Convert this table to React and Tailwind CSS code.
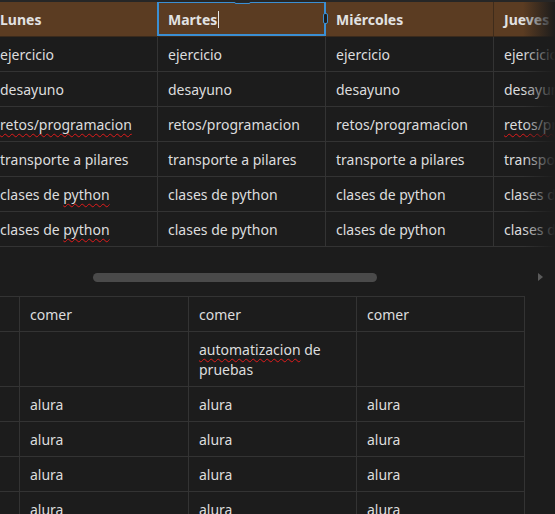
import React from 'react';

const days = ['Lunes', 'Martes', 'Miércoles', 'Jueves'];

const rows1 = [
  ['ejercicio', false],
  ['desayuno', false],
  ['retos/programacion', true],
  ['transporte a pilares', false],
  ['clases de python', 'python'],
  ['clases de python', 'python'],
];

function Misspelled({ children }) {
  return (
    <span className="underline decoration-wavy decoration-[#e01b1b] decoration-1 underline-offset-[3px]">
      {children}
    </span>
  );
}

function CellText({ text, spell, col }) {
  // spell check marks only show in the first and last visible column
  if (!spell || col === 1 || col === 2) return <span>{text}</span>;
  if (spell === true) return <Misspelled>{text}</Misspelled>;
  const i = text.indexOf(spell);
  return (
    <span>
      {text.slice(0, i)}
      <Misspelled>{spell}</Misspelled>
      {text.slice(i + spell.length)}
    </span>
  );
}

const rows2 = [
  ['', 'comer', 'comer', 'comer'],
  ['', '', 'automatizacion de pruebas', ''],
  ['', 'alura', 'alura', 'alura'],
  ['', 'alura', 'alura', 'alura'],
  ['', 'alura', 'alura', 'alura'],
  ['', 'alura', 'alura', 'alura'],
];

const widths2 = ['w-[168px]', 'w-[169px]', 'w-[168px]', 'w-[168px]'];

export default function App() {
  return (
    <div
      className="w-[555px] h-[514px] overflow-hidden bg-[#1c1c1c] text-[#dcddde] text-[14px] leading-5"
      style={{ fontFamily: '"Noto Sans", "Open Sans", sans-serif' }}
    >
      <div className="h-[2px] bg-[#262626]" />

      {/* top table */}
      <div className="relative overflow-hidden">
        <div className="flex flex-col ml-[-10px] w-max">
          <div className="flex h-[35px] bg-[#5b3c22] border-b border-[#3a2a1c]">
            {days.map((d, i) => (
              <div
                key={d}
                className="relative w-[168px] shrink-0 flex items-center pl-[10px] pt-px border-r border-[#3f2c1b] font-bold text-[#e2e2e2]"
              >
                {d}
                {i === 1 && (
                  <>
                    <span className="w-px h-[17px] bg-[#e6e6e6] ml-px" />
                    <div className="absolute -left-px -top-px w-[169px] h-[35px] border-2 border-[#3b8fd3]" />
                    <div className="absolute left-[76px] -top-[3px] w-[17px] h-[5px] rounded-[2px] bg-[#2a2a2a] border border-[#3b8fd3]" />
                    <div className="absolute -right-[3px] top-[11px] w-[5px] h-[11px] rounded-[2px] bg-[#1e1e1e] border border-[#3b8fd3]" />
                  </>
                )}
              </div>
            ))}
          </div>
          {rows1.map(([text, spell], r) => (
            <div key={r} className="flex h-[35px] border-b border-[#333333]">
              {days.map((d, c) => (
                <div
                  key={d}
                  className="w-[168px] shrink-0 flex items-center pl-[10px] pt-[2px] border-r border-[#333333] whitespace-nowrap overflow-hidden"
                >
                  <CellText text={text} spell={spell} col={c} />
                </div>
              ))}
            </div>
          ))}
        </div>
        <div className="absolute right-0 top-0 bottom-0 w-[32px] bg-gradient-to-r from-transparent to-[#1c1c1c]" />
      </div>

      {/* horizontal scrollbar */}
      <div className="relative h-[49px]">
        <div className="absolute left-[93px] top-[26px] w-[284px] h-[9px] rounded-full bg-[#4a4a4a]" />
        <div className="absolute left-[538px] top-[26px] w-0 h-0 border-y-[4px] border-y-transparent border-l-[5px] border-l-[#5a5a5a]" />
      </div>

      {/* bottom table */}
      <div className="flex flex-col ml-[-148px] w-max border-t border-[#333333]">
        {rows2.map((cells, r) => (
          <div
            key={r}
            className={`flex border-b border-[#333333] ${r === 1 ? 'h-[55px]' : 'h-[35px]'}`}
          >
            {cells.map((text, c) => (
              <div
                key={c}
                className={`${widths2[c]} shrink-0 flex items-center pl-[10px] pr-2 pt-[2px] border-r border-[#333333]`}
              >
                {text.startsWith('automatizacion') ? (
                  <span>
                    <Misspelled>automatizacion</Misspelled> de pruebas
                  </span>
                ) : (
                  text
                )}
              </div>
            ))}
          </div>
        ))}
      </div>
    </div>
  );
}
